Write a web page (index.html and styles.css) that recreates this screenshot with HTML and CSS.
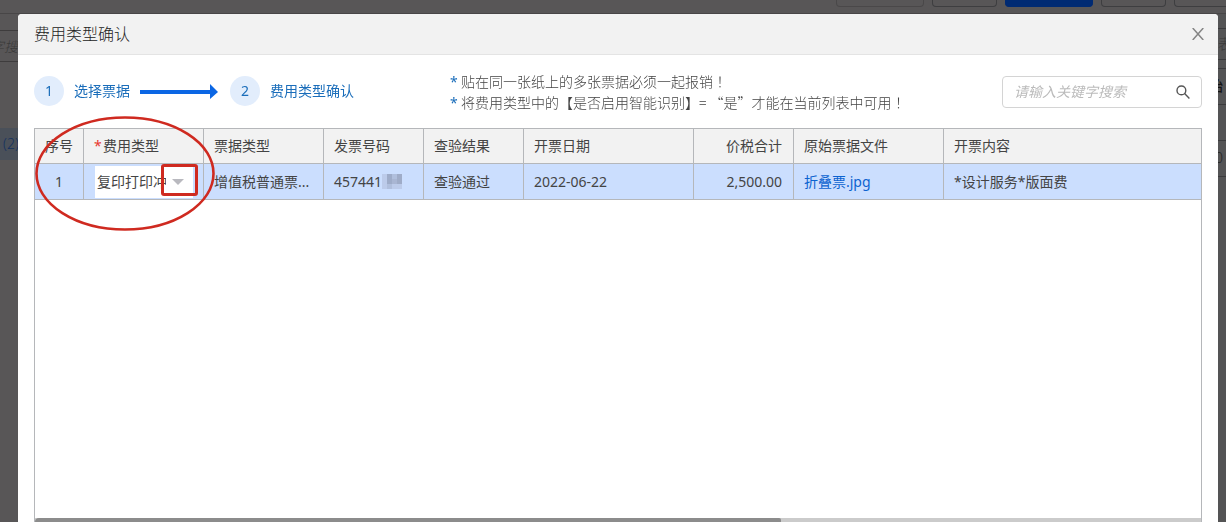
FILE: index.html
```html
<!DOCTYPE html>
<html lang="zh-CN">
<head>
<meta charset="utf-8">
<title>费用类型确认</title>
<link rel="stylesheet" href="styles.css">
</head>
<body>
<div class="app" aria-hidden="true">
  <div class="app-toolbar">
    <span class="app-btn app-btn-wide app-btn-faint"></span>
    <span class="app-btn"></span>
    <span class="app-btn app-btn-wide app-btn-primary"></span>
    <span class="app-btn"></span>
    <span class="app-btn app-btn-last"></span>
  </div>
  <div class="app-body">
    <div class="app-left">
      <div class="app-left-head"></div>
      <div class="app-left-search">字搜</div>
      <div class="app-left-item">(2)</div>
    </div>
    <div class="app-right">
      <div class="app-right-head"></div>
      <div class="app-right-search">表</div>
      <div class="app-right-gap"></div>
      <div class="app-right-cell app-right-bold">始</div>
      <div class="app-right-cell"></div>
      <div class="app-right-cell app-right-num">0</div>
    </div>
  </div>
</div>

<section class="modal" role="dialog" aria-labelledby="modal-title">
  <header class="modal-head">
    <h1 class="modal-title" id="modal-title">费用类型确认</h1>
    <button class="close" type="button" aria-label="关闭">
      <svg width="12" height="12" viewBox="0 0 12 12"><path d="M.7 0 11.3 12M11.3 0 .7 12" fill="none" stroke="#858585" stroke-width="1.5"/></svg>
    </button>
  </header>

  <div class="modal-bar">
    <ol class="steps">
      <li class="step"><span class="step-num">1</span><span>选择票据</span></li>
      <li class="step-arrow"><svg width="78" height="16" viewBox="0 0 78 16"><path d="M0 7h70V1l8 8-8 7V11H0z" fill="#0b66e4"/></svg></li>
      <li class="step"><span class="step-num">2</span><span>费用类型确认</span></li>
    </ol>
    <div class="tips">
      <p class="tip"><span class="tip-mark">*</span><span>贴在同一张纸上的多张票据必须一起报销<span class="bang" lang="zh-TW">！</span></span></p>
      <p class="tip"><span class="tip-mark">*</span><span>将费用类型中的【是否启用智能识别】= “是”才能在当前列表中可用<span class="bang" lang="zh-TW">！</span></span></p>
    </div>
    <div class="search">
      <input class="search-input" type="text" placeholder="请输入关键字搜索" aria-label="关键字搜索">
      <button class="search-btn" type="button" aria-label="搜索">
        <svg width="14" height="14" viewBox="0 0 14 14"><g fill="none" stroke="#555" stroke-width="1.4"><circle cx="5.4" cy="5.4" r="4.4"/><path d="m8.6 8.6 4.8 4.8"/></g></svg>
      </button>
    </div>
  </div>

  <div class="grid">
    <table class="table">
      <colgroup>
        <col class="c-no"><col class="c-type"><col class="c-type"><col class="c-mid"><col class="c-mid"><col class="c-date"><col class="c-mid"><col class="c-file"><col>
      </colgroup>
      <thead>
        <tr>
          <th class="center">序号</th>
          <th><span class="required">*</span>费用类型</th>
          <th>票据类型</th>
          <th>发票号码</th>
          <th>查验结果</th>
          <th>开票日期</th>
          <th class="right">价税合计</th>
          <th>原始票据文件</th>
          <th>开票内容</th>
        </tr>
      </thead>
      <tbody>
        <tr>
          <td class="center">1</td>
          <td class="edit">
            <div class="picker">
              <select class="picker-select" aria-label="费用类型"><option>复印打印冲</option></select>
              <svg class="picker-caret" width="12" height="6" viewBox="0 0 12 6"><path d="M0 0h12L6 6z" fill="#b9b9bf"/></svg>
              <svg class="mark" width="180" height="116" viewBox="0 0 180 116">
                <ellipse cx="90" cy="58.500" rx="88.500" ry="56" fill="none" stroke="#cf2a20" stroke-width="2.600"/>
                <rect x="127.500" y="50.500" width="34" height="29" rx="1.500" fill="none" stroke="#cf2a20" stroke-width="3"/>
              </svg>
            </div>
          </td>
          <td>增值税普通票...</td>
          <td><span class="masked">457441<svg width="20" height="15" viewBox="0 0 20 15"><path d="M0 0h20v15H0z" fill="#bccbea"/><path d="M5 0h5v10H5z" fill="#9eacc9"/><path d="M10 0h5v5h-5zM5 10h5v5H5z" fill="#b0bfdd"/><path d="M10 5h5v5h-5z" fill="#a9b6d3"/><path d="M15 0h5v10h-5z" fill="#9facc8"/></svg></span></td>
          <td>查验通过</td>
          <td>2022-06-22</td>
          <td class="right">2,500.00</td>
          <td><a class="file" href="#">折叠票.jpg</a></td>
          <td>*设计服务*版面费</td>
        </tr>
      </tbody>
    </table>
    <div class="scroll"><div class="scroll-thumb"></div></div>
  </div>
</section>
</body>
</html>
```
FILE: styles.css
```css
* { box-sizing: border-box; }

body {
  margin: 0;
  height: 100vh;
  overflow: hidden;
  background: #585657;
  color: #444;
  font: 14px/20px "Noto Sans", "Noto Sans CJK SC", sans-serif;
}

button, input, select { font: inherit; color: inherit; }

/* dimmed application under the dialog */
.app { height: 100%; color: #3a3a3a; font-weight: 300; }
.app-toolbar {
  display: flex;
  justify-content: flex-end;
  gap: 8px;
  height: 14px;
  border-bottom: 1px solid #484647;
}
.app-btn {
  width: 65px;
  height: 7px;
  border: 1px solid #3e3e40;
  border-top: 0;
  border-radius: 0 0 4px 4px;
}
.app-btn-wide { width: 88px; }
.app-btn-faint { border-color: #4a4849; }
.app-btn-primary { background: #002a73; border-color: #002a73; }
.app-btn-last { width: 52px; border-right: 0; border-radius: 0 0 0 4px; }
.app-body { display: flex; justify-content: space-between; }
.app-left { width: 18px; }
.app-left-head { height: 17px; border-bottom: 1px solid #3e3c3d; }
.app-left-search {
  display: flex;
  justify-content: flex-end;
  height: 31px;
  border-bottom: 1px solid #3e3c3d;
  line-height: 32px;
  font-style: italic;
  white-space: nowrap;
}
.app-left-item {
  margin-top: 66px;
  padding-left: 3px;
  background: #4a5059;
  color: #14305f;
  line-height: 32px;
  white-space: nowrap;
  overflow: hidden;
}
.app-right { width: 8px; height: 508px; overflow: hidden; background: #545455; }
.app-right-head { height: 15px; border-bottom: 1px solid #3b3b3d; }
.app-right-search { height: 31px; border-bottom: 1px solid #3b3b3d; line-height: 30px; }
.app-right-gap { height: 9px; border-bottom: 1px solid #3b3b3d; }
.app-right-cell {
  display: flex;
  justify-content: flex-end;
  height: 36px;
  padding-right: 3px;
  border-bottom: 1px solid #3b3b3d;
  line-height: 34px;
}
.app-right-bold { color: #111; font-weight: 500; }
.app-right-num { color: #222; }

.modal {
  position: fixed;
  inset: 14px 8px 0 18px;
  display: flex;
  flex-direction: column;
  background: #fff;
  border-radius: 4px 4px 0 0;
}
.modal-head {
  display: flex;
  align-items: center;
  justify-content: space-between;
  height: 41px;
  padding: 0 14px 0 16px;
  background: #f2f2f2;
  border-bottom: 1px solid #e4e4e4;
  border-radius: 4px 4px 0 0;
}
.modal-title { margin: 0; font-size: 16px; font-weight: 300; line-height: 24px; color: #222; }
.close, .search-btn { display: flex; padding: 0; border: 0; background: none; }

.modal-bar {
  display: grid;
  grid-template-columns: 416px 1fr 200px;
  padding: 16px 16px 0;
  height: 73px;
}
.steps {
  display: flex;
  gap: 10px;
  margin: 0;
  padding: 5px 0 0;
  list-style: none;
  color: #1a6dba;
}
.step { display: flex; align-items: center; gap: 10px; height: 30px; white-space: nowrap; }
.step-num {
  width: 30px;
  border-radius: 50%;
  background: #e2edfc;
  line-height: 30px;
  text-align: center;
}
.step-arrow { display: flex; align-items: center; height: 30px; margin-right: 2px; }
.tips { font-family: "Noto Sans CJK SC", sans-serif; font-weight: 300; color: #444; }
.tip { display: flex; gap: 3px; margin: 0; height: 21px; line-height: 21px; white-space: pre; }
.tip-mark { width: 8px; font-family: "Noto Sans", sans-serif; font-weight: 400; color: #1a6dba; }
.bang { font-family: "Noto Sans CJK TC", sans-serif; }

.search {
  display: flex;
  align-items: center;
  height: 32px;
  margin-top: 5px;
  padding: 0 11px 0 11px;
  border: 1px solid #d4d4d4;
  border-radius: 4px;
}
.search-input { flex: 1; min-width: 0; padding: 0; border: 0; outline: 0; background: none; }
.search-input::placeholder { color: #bbb; font-style: italic; }

.grid {
  flex: 1;
  display: flex;
  flex-direction: column;
  margin: 0 16px;
  border: solid #b5b7ba;
  border-width: 1px 1px 0;
}
.table { width: 100%; table-layout: fixed; border-collapse: separate; border-spacing: 0; }
.c-no { width: 49px; }
.c-type { width: 120px; }
.c-mid { width: 100px; }
.c-date { width: 170px; }
.c-file { width: 150px; }
.table th, .table td {
  height: 35px;
  padding: 0 10px;
  border: solid #b5b7ba;
  border-width: 0 1px 1px 0;
  font-weight: 400;
  text-align: left;
  white-space: nowrap;
}
.table td { height: 36px; background: #cbdefe; }
.table th { background: #f2f2f2; }
.table th:last-child, .table td:last-child { border-right: 0; }
.table .center { padding: 0; text-align: center; }
.table .right { padding-right: 11px; text-align: right; }
.table .edit { padding-left: 11px; }
.required { display: inline-block; width: 9px; color: #e8392f; }
.file { color: #0b63d0; text-decoration: none; }
.masked { display: flex; align-items: center; }

.picker { position: relative; width: 98px; height: 32px; background: #fff; }
.picker-select {
  appearance: none;
  width: 100%;
  height: 32px;
  padding: 0 27px 0 2px;
  border: 0;
  background: none;
}
.picker-caret { position: absolute; right: 9px; top: 13px; }
.mark { position: absolute; left: -60px; top: -51px; z-index: 1; pointer-events: none; }

.scroll { height: 4px; margin-top: auto; background: #cbcbcb; }
.scroll-thumb { width: 64%; height: 4px; background: #8c8c8c; border-radius: 4px 2px 0 0; }
```
